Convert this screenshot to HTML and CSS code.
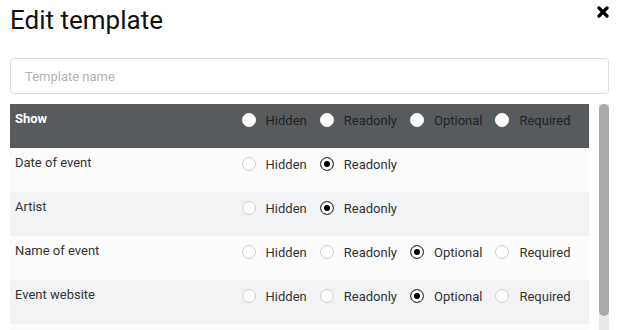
FILE: index.html
```html
<!doctype html>
<html lang="en">
    <head>
        <meta charset="UTF-8" />
        <meta name="viewport" content="width=device-width, initial-scale=1.0" />
        <title>Edit template</title>
        <link rel="stylesheet" href="styles.css">
    </head>
    <body>
        <div class="modal">
            <div class="modal-header">
                <h2>Edit template</h2>
                <button type="button" class="close-btn" aria-label="Close">
                    <svg width="12" height="12" viewBox="0 0 12 12">
                        <path d="M2 2 L10 10 M10 2 L2 10" stroke="#000" stroke-width="3.2" stroke-linecap="round" />
                    </svg>
                </button>
            </div>

            <input type="text" class="name-input" placeholder="Template name" />

            <div class="field-list">
                <div class="rows">
                    <div class="field-row head">
                        <div class="field-name">Show</div>
                        <div class="options">
                            <label class="opt"><input type="radio" name="all" /> Hidden</label>
                            <label class="opt"><input type="radio" name="all" /> Readonly</label>
                            <label class="opt"><input type="radio" name="all" /> Optional</label>
                            <label class="opt"><input type="radio" name="all" /> Required</label>
                        </div>
                    </div>

                    <div class="field-row">
                        <div class="field-name">Date of event</div>
                        <div class="options">
                            <label class="opt"><input type="radio" name="date" /> Hidden</label>
                            <label class="opt"><input type="radio" name="date" checked /> Readonly</label>
                        </div>
                    </div>
                    <div class="field-row">
                        <div class="field-name">Artist</div>
                        <div class="options">
                            <label class="opt"><input type="radio" name="artist" /> Hidden</label>
                            <label class="opt"><input type="radio" name="artist" checked /> Readonly</label>
                        </div>
                    </div>
                    <div class="field-row">
                        <div class="field-name">Name of event</div>
                        <div class="options">
                            <label class="opt"><input type="radio" name="ename" /> Hidden</label>
                            <label class="opt"><input type="radio" name="ename" /> Readonly</label>
                            <label class="opt"><input type="radio" name="ename" checked /> Optional</label>
                            <label class="opt"><input type="radio" name="ename" /> Required</label>
                        </div>
                    </div>
                    <div class="field-row">
                        <div class="field-name">Event website</div>
                        <div class="options">
                            <label class="opt"><input type="radio" name="site" /> Hidden</label>
                            <label class="opt"><input type="radio" name="site" /> Readonly</label>
                            <label class="opt"><input type="radio" name="site" checked /> Optional</label>
                            <label class="opt"><input type="radio" name="site" /> Required</label>
                        </div>
                    </div>
                </div>

                <!-- scrollbar -->
                <div class="scroll-track">
                    <div class="scroll-thumb"></div>
                </div>
            </div>
        </div>
    </body>
</html>
```

FILE: styles.css
```css
* {
    font-family: 'Roboto', 'Liberation Sans', sans-serif;
    margin: 0;
    padding: 0;
    box-sizing: border-box;
}

html,
body {
    overflow: hidden;
}

body {
    background-color: white;
}

.modal {
    padding: 5px 13px 0 10px;
}

.modal-header {
    display: flex;
    justify-content: space-between;
    align-items: flex-start;
}

h2 {
    font-size: 26px;
    font-weight: 400;
    line-height: 31px;
    color: #111;
}

.close-btn {
    border: none;
    background: none;
    cursor: pointer;
    margin-top: 1px;
    display: flex;
}

.name-input {
    display: block;
    width: 100%;
    height: 36px;
    margin-top: 22px;
    padding: 0 14px;
    border: 1px solid #ddd;
    border-radius: 4px;
    font-size: 13px;
    color: #333;
}

.name-input::placeholder {
    color: #b3b3b3;
}

/* List of fields */
.field-list {
    display: flex;
    gap: 10px;
    margin-top: 10px;
    height: 226px;
    overflow: hidden;
}

.rows {
    flex: 1;
    background-color: #fcfcfc;
}

.scroll-track {
    width: 10px;
    background-color: #e8e8e8;
}

.scroll-thumb {
    height: 212px;
    background-color: #a9a9a9;
    border-radius: 5px;
}

.field-row {
    display: grid;
    grid-template-columns: 40% 1fr;
    height: 44px;
    padding-top: 6px;
    background-color: #fcfcfc;
    font-size: 13px;
    color: #333;
}

.field-row:nth-child(odd) {
    background-color: #f2f3f5;
}

.field-name {
    padding-left: 5px;
    line-height: 17px;
}

.options {
    display: flex;
    align-items: center;
    height: 20px;
}

.opt {
    display: flex;
    align-items: center;
    gap: 10px;
    margin-right: 13px;
    cursor: pointer;
}

.opt input {
    appearance: none;
    width: 14px;
    height: 14px;
    border: 1px solid #cfcfcf;
    border-radius: 50%;
    background-color: white;
    margin: 0;
}

.opt input:checked {
    border-color: #444;
    background-color: #000;
    box-shadow: inset 0 0 0 3px white;
}

/* Header row */
.field-row.head {
    background-color: #585b5e;
    color: #222;
}

.head .field-name {
    color: white;
    font-weight: 700;
}

.head .opt input {
    border-color: white;
}
```
